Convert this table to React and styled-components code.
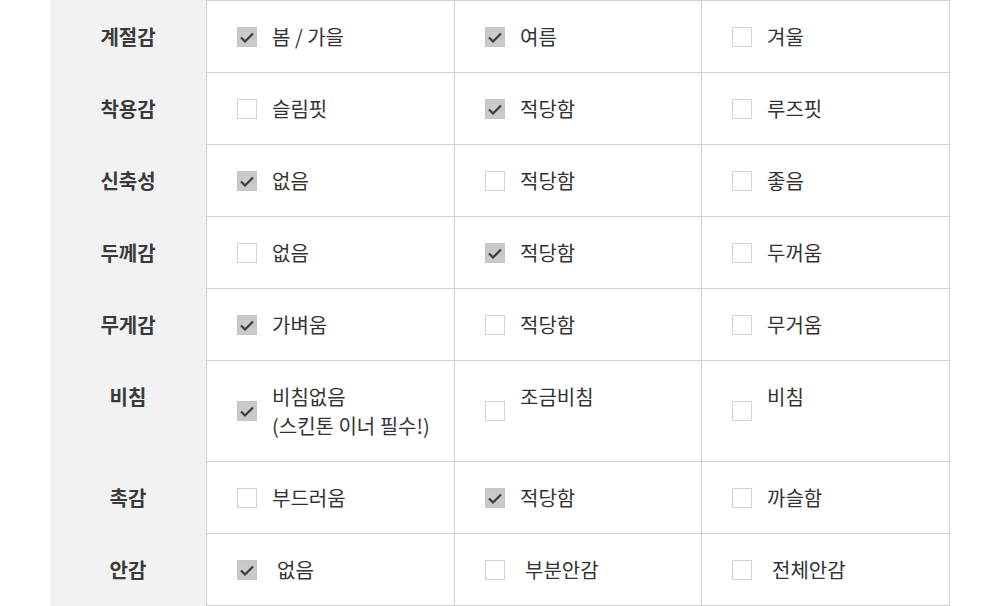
import React from "react";
import styled, { createGlobalStyle } from "styled-components";

const rows = [
  { label: "계절감", items: [["봄 / 가을", true], ["여름", true], ["겨울", false]] },
  { label: "착용감", items: [["슬림핏", false], ["적당함", true], ["루즈핏", false]] },
  { label: "신축성", items: [["없음", true], ["적당함", false], ["좋음", false]] },
  { label: "두께감", items: [["없음", false], ["적당함", true], ["두꺼움", false]] },
  { label: "무게감", items: [["가벼움", true], ["적당함", false], ["무거움", false]] },
  {
    label: "비침",
    items: [["비침없음\n(스킨톤 이너 필수!)", true], ["조금비침", false], ["비침", false]],
  },
  { label: "촉감", items: [["부드러움", false], ["적당함", true], ["까슬함", false]] },
  { label: "안감", shift: true, items: [["없음", true], ["부분안감", false], ["전체안감", false]] },
];

export default function App() {
  return (
    <>
      <GlobalStyle />
      <Table>
        {rows.map((row, r) => (
          <React.Fragment key={row.label}>
            <Label $first={r === 0}>{row.label}</Label>
            {row.items.map(([text, checked], c) => (
              <Cell key={c} $first={r === 0} $last={c === 2}>
                <Box $checked={checked}>
                  {checked && (
                    <svg width="20" height="20" viewBox="0 0 20 20">
                      <polyline
                        points="4,10.5 8,14.5 16,6.5"
                        fill="none"
                        stroke="#3a3a3a"
                        strokeWidth="2.2"
                      />
                    </svg>
                  )}
                </Box>
                <Text $shift={row.shift}>{text}</Text>
              </Cell>
            ))}
          </React.Fragment>
        ))}
      </Table>
    </>
  );
}

const GlobalStyle = createGlobalStyle`
  body {
    margin: 0;
    background: #fff;
    font-family: "Noto Sans CJK KR", "Noto Sans", sans-serif;
    color: #333;
  }
`;

const Table = styled.div`
  margin-left: 50px;
  width: 900px;
  display: grid;
  grid-template-columns: 156px 248px 247px 249px;
`;

const Label = styled.div`
  background: #f2f2f2;
  padding-top: ${(p) => (p.$first ? "22px" : "21px")};
  font-size: 20px;
  line-height: 29px;
  font-weight: 700;
  color: #3a3a3a;
  text-align: center;
`;

const Cell = styled.div`
  display: flex;
  align-items: center;
  gap: 15px;
  padding: 21px 20px 21px 30px;
  border-left: 1px solid #cfcfcf;
  border-bottom: 1px solid #cfcfcf;
  border-top: ${(p) => (p.$first ? "1px solid #cfcfcf" : "none")};
  border-right: ${(p) => (p.$last ? "1px solid #cfcfcf" : "none")};
`;

const Box = styled.span`
  flex: none;
  width: 20px;
  height: 20px;
  box-sizing: border-box;
  border: 1px solid ${(p) => (p.$checked ? "#c6c6c6" : "#d2d2d2")};
  background: ${(p) => (p.$checked ? "#c9c9c9" : "#fff")};
  position: relative;

  svg {
    position: absolute;
    left: -1px;
    top: -1px;
  }
`;

const Text = styled.span`
  align-self: flex-start;
  font-size: 20px;
  line-height: 29px;
  color: #333;
  white-space: pre-line;
  padding-left: ${(p) => (p.$shift ? "5px" : "0")};
`;
